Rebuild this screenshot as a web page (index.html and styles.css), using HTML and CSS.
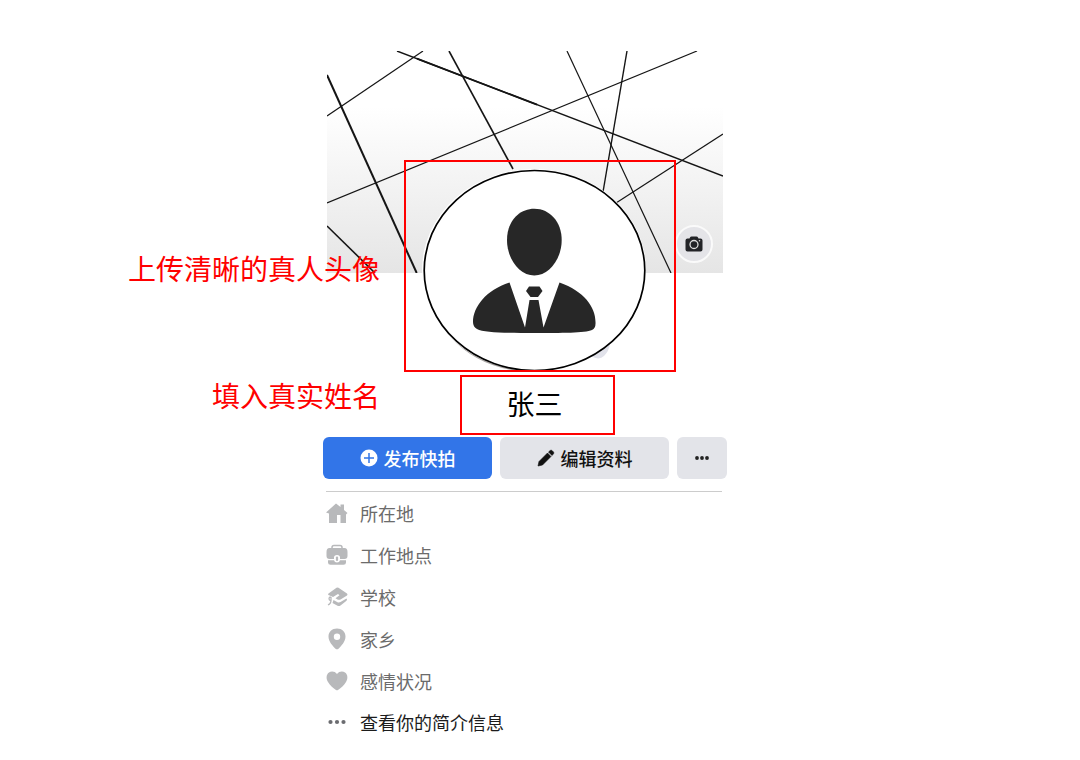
FILE: index.html
```html
<!DOCTYPE html>
<html lang="zh-CN">
<head>
  <meta charset="UTF-8" />
  <meta name="viewport" content="width=device-width, initial-scale=1.0"/>
  <title>张三</title>
  <link rel="stylesheet" href="styles.css">
</head>
<body>
  <main class="profile">
    <div class="cover">
      <svg class="cover-art" viewBox="0 0 396 222" preserveAspectRatio="none" aria-hidden="true">
        <g stroke="#151515" stroke-width="1.2" fill="none">
          <path d="M0 24 89.700 222" stroke-width="2"/>
          <path d="M0 65 96 0"/>
          <path d="M70 0 396 125" stroke-width="1.400"/>
          <path d="M90 7.700 210 53.700" stroke-width="1.800"/>
          <path d="M122 0 186 118" stroke-width="1.600"/>
          <path d="M0 152 370 0"/>
          <path d="M0 175 48 222" stroke-width="1.600"/>
          <path d="M240 0 344 222"/>
          <path d="M300 0 276 141" stroke-width="1.400"/>
          <path d="M289 152 396 83"/>
        </g>
      </svg>
      <button class="camera" aria-label="更换封面">
        <svg viewBox="0 0 18 16" width="18" height="16" aria-hidden="true">
          <path d="M5 1.500Q5.500.5 6.500.5h5q1 0 1.500 1L13.500 2.500H15.500q2 0 2 2v9q0 2-2 2h-13q-2 0-2-2v-9q0-2 2-2h2z" fill="#222327"/>
          <circle cx="9" cy="8.500" r="4" fill="none" stroke="#ddd" stroke-width="1.300"/>
          <circle cx="14.500" cy="4.800" r=".8" fill="#ddd"/>
        </svg>
      </button>
    </div>

    <section class="photo-box">
      <span class="callout">上传清晰的真人头像</span>
      <svg class="avatar" viewBox="2 2 268 208" role="img" aria-label="头像">
        <path d="M182 193Q194 202 200 196Q205 191 206 184Z" fill="#e1e2ea"/>
        <path d="M48 177Q76 208 125 211" fill="none" stroke="#aaa6a4" stroke-width="2"/>
        <ellipse cx="130" cy="110" rx="112" ry="101" fill="#fff"/>
        <ellipse cx="130.500" cy="110.500" rx="110.300" ry="100" fill="#fff" stroke="#000" stroke-width="1.700"/>
        <g fill="#272727">
          <path d="M130.300 48.700C146 48.700 157.700 62 157.700 80C157.700 99 145 115.500 130.300 115.500C115.500 115.500 103 99 103 80C103 62 114.500 48.700 130.300 48.700Z"/>
          <path d="M105.500 122.500 121 167.500 125.500 140H134.500L139.500 167.500 155.500 122.500C180 131 191.500 147 191.500 162Q192 168 188 170C181 173 157 173 130.500 173C104 173 80 173 73 169Q69 167 69 162C69 147 82 130 105.500 122.500Z"/>
          <path d="M125 126.500H135.500L138.500 131 134 137H126.500L122 131Z"/>
        </g>
      </svg>
    </section>

    <section class="name-box">
      <span class="callout">填入真实姓名</span>
      <h1>张三</h1>
    </section>

    <div class="actions">
      <button class="btn primary">
        <svg viewBox="0 0 18 18" width="18" height="18" aria-hidden="true">
          <circle cx="9" cy="9" r="8.500" fill="#fff"/>
          <path d="M9 4v10M4 9h10" stroke="#3275e8" stroke-width="1.500"/>
        </svg>
        发布快拍
      </button>
      <button class="btn">
        <svg viewBox="0 0 18 18" width="18" height="18" aria-hidden="true">
          <path d="M1 17 2 12.500 10.500 4 14 7.500 5.500 16ZM11.500 3 13.200 1.500Q14 .8 15 1.500L16.500 3Q17.200 4 16.500 4.800L15 6.500Z" fill="#111" stroke="#111" stroke-width=".6" stroke-linejoin="round"/>
        </svg>
        编辑资料
      </button>
      <button class="btn" aria-label="更多">
        <svg viewBox="0 0 16 6" width="16" height="6" aria-hidden="true">
          <g fill="#222"><circle cx="3" cy="3" r="1.900"/><circle cx="8" cy="3" r="1.900"/><circle cx="13" cy="3" r="1.900"/></g>
        </svg>
      </button>
    </div>

    <ul class="info">
      <li>
        <svg class="icon" viewBox="0 0 22 22" aria-hidden="true">
          <path d="M0 10.500 10 1.500 14.500 5V2.500H18V8L21.500 11 20 12.500V21H14.500V13H11V21H3V11.500Z"/>
        </svg>
        所在地
      </li>
      <li>
        <svg class="icon" viewBox="0 0 22 22" aria-hidden="true">
          <path d="M6 5V3.500Q6 1.500 8 1.500H14Q16 1.500 16 3.500V5" fill="none" stroke="#b8b9bb" stroke-width="1.500"/>
          <path d="M3.500 4H18.500Q21.500 4 21.500 8V12Q21.500 15 18.500 15H14V13.500Q14 11 11 11T8 13.500V15H3.500Q.5 15 .5 12V8Q.5 4 3.500 4Z"/>
          <path d="M2 16.200H8Q8.500 18.500 11 18.500T14 16.200H20V18.500Q20 20.800 17.500 20.800H4.500Q2 20.800 2 18.500Z"/>
          <rect x="9.900" y="12.500" width="2.200" height="4.500" rx="1.100"/>
        </svg>
        工作地点
      </li>
      <li>
        <svg class="icon" viewBox="0 0 22 22" aria-hidden="true">
          <path d="M2.500 7.500 10.500 1.800Q11.500 1.200 12.500 1.800L21 7.500Q22 8.500 21 9.500L14.500 13.500Q13 14.200 11.500 13.500L9.500 12.300 13.500 9.300 12 8 7 11 2.500 9Q1.500 8.200 2.500 7.500Z"/>
          <path d="M7.500 14 11.500 16.200Q13 16.800 14.500 16L20.500 12.500Q21.500 13.500 20.500 14.700L14.500 19.500Q13 20.500 11.500 19.700L6.500 17Z"/>
          <path d="M4.800 11A1.800 1.800 0 1 0 4.800 14.600M5 11V14.500Q5 17.500 2 19" fill="none" stroke="#b8b9bb" stroke-width="1.300"/>
        </svg>
        学校
      </li>
      <li>
        <svg class="icon" viewBox="0 0 22 22" aria-hidden="true">
          <path fill-rule="evenodd" d="M11 .5C16 .5 19.500 4 19.500 8.500C19.500 14 15 18 12.500 20.700Q11 22 9.500 20.700C7 18 2.500 14 2.500 8.500C2.500 4 6 .5 11 .5ZM11 5.500A3.200 3.200 0 1 0 11 11.900A3.200 3.200 0 1 0 11 5.500Z"/>
        </svg>
        家乡
      </li>
      <li>
        <svg class="icon" viewBox="0 0 22 22" aria-hidden="true">
          <path d="M11 4C13 1 17 .8 19 2.500C22 4.500 22 9 20 12C18 15.500 14.500 18.500 12 20Q11 20.700 10 20C7.500 18.500 4 15.500 2 12C0 9 0 4.500 3 2.500C5 .8 9 1 11 4Z"/>
        </svg>
        感情状况
      </li>
      <li>
        <svg class="icon dots" viewBox="0 0 22 22" aria-hidden="true">
          <circle cx="4.500" cy="11" r="2.100"/><circle cx="11" cy="11" r="2.100"/><circle cx="17.500" cy="11" r="2.100"/>
        </svg>
        <a href="#">查看你的简介信息</a>
      </li>
    </ul>
  </main>
</body>
</html>
```
FILE: styles.css
```css
* {
  box-sizing: border-box;
}
body {
  margin: 0;
  padding: 51px 30px 16px 0;
  background: #fff;
  color: #000;
  font-family: "Noto Sans CJK SC", sans-serif;
  font-size: 18px;
}
.profile {
  width: 100%;
  max-width: 404px;
  margin: 0 auto;
}
.cover {
  position: relative;
  height: 222px;
  margin: 0 4px;
  background: linear-gradient(#fff 0%, #fff 25%, #f3f3f3 60%, #e5e5e5 100%);
}
.cover-art {
  display: block;
  width: 100%;
  height: 100%;
}
.camera {
  position: absolute;
  right: 10px;
  bottom: 10px;
  display: flex;
  align-items: center;
  justify-content: center;
  width: 38px;
  height: 38px;
  padding: 0;
  border: 2px solid #fafafa;
  border-radius: 50%;
  background: #e4e4e8;
}
.photo-box, .name-box {
  position: relative;
  border: 2px solid #ff0000;
}
.photo-box {
  width: 272px;
  margin: -113px 0 0 81px;
}
.avatar {
  display: block;
  width: 100%;
}
.name-box {
  display: flex;
  align-items: center;
  justify-content: center;
  width: 155px;
  height: 60px;
  margin: 3px 0 0 137px;
}
.name-box h1 {
  margin: 0;
  padding: 0 6px 4px 0;
  font-size: 28px;
  font-weight: 400;
  line-height: 40px;
}
/* red notes to the left of the framed areas */
.callout {
  position: absolute;
  right: 100%;
  color: #ff0000;
  font-size: 28px;
  line-height: 40px;
  white-space: nowrap;
}
.photo-box .callout {
  top: 86px;
  margin-right: 26px;
}
.name-box .callout {
  top: -2px;
  margin-right: 82px;
}
.actions {
  display: grid;
  grid-template-columns: 1fr 1fr 50px;
  gap: 8px;
  margin-top: 2px;
}
.btn {
  display: flex;
  align-items: center;
  justify-content: center;
  gap: 6px;
  height: 42px;
  padding: 0;
  border: none;
  border-radius: 6px;
  background: #e3e4e9;
  color: #111;
  font-family: inherit;
  font-size: 18px;
  font-weight: 500;
  cursor: pointer;
}
.btn.primary {
  background: #3275e8;
  color: #fff;
}
.info {
  list-style: none;
  margin: 12px 5px 0 3px;
  padding: 0;
  border-top: 1px solid #ccc;
}
.info li {
  display: flex;
  align-items: center;
  gap: 12px;
  height: 42px;
  color: #6b6b6b;
}
.info li:last-child {
  height: 40px;
}
.info a {
  color: #1c1c1c;
  text-decoration: none;
}
.icon {
  width: 22px;
  height: 22px;
  fill: #b8b9bb;
}
.dots {
  fill: #6b6c70;
}
```
